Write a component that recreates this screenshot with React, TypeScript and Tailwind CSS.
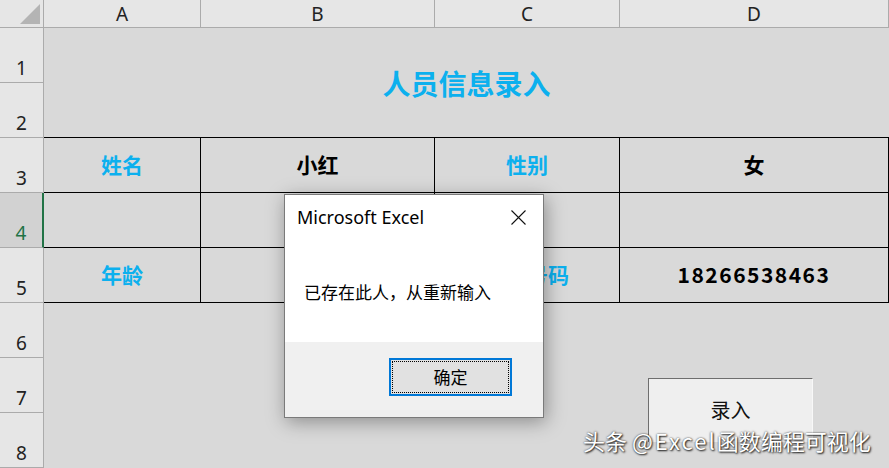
import React from "react";

const cjk = { fontFamily: '"Noto Sans CJK SC", "Noto Sans", sans-serif' };
const ui = { fontFamily: '"Noto Sans", "Noto Sans CJK SC", sans-serif' };

function RowHead({ n, active }: { n: number; active?: boolean }) {
  return (
    <div
      className={
        active
          ? "h-[55px] w-[44px] border-b border-[#ababab] border-r-2 border-r-[#217346] bg-[#d2d2d2] text-[#217346] flex items-end justify-center pb-[2px] text-[19px] leading-[24px]"
          : "h-[55px] w-[44px] border-b border-r border-[#ababab] bg-[#e6e6e6] text-[#222] flex items-end justify-center pb-[2px] text-[19px] leading-[24px]"
      }
      style={ui}
    >
      {n}
    </div>
  );
}

function Cell({
  w,
  children,
  blue,
}: {
  w: string;
  children?: React.ReactNode;
  blue?: boolean;
}) {
  return (
    <div
      className={`${w} h-full border-r border-black flex items-center justify-center font-bold text-[21px] ${
        blue ? "text-[#0cb0ee]" : "text-black"
      }`}
      style={cjk}
    >
      {children}
    </div>
  );
}

export default function App() {
  return (
    <div className="relative w-[889px] h-[468px] overflow-hidden bg-[#d9d9d9] flex flex-col">
      {/* column header */}
      <div
        className="flex h-[28px] bg-[#e6e6e6] border-b border-[#ababab] text-[19px] leading-[24px] text-[#222]"
        style={ui}
      >
        <div className="w-[44px] h-full border-r border-[#ababab] relative">
          <svg className="absolute left-0 top-0" width="44" height="27">
            <polygon points="40,4 40,24 20,24" fill="#b4b4b4" />
          </svg>
        </div>
        <div className="w-[157px] border-r border-[#ababab] flex items-center justify-center">A</div>
        <div className="w-[234px] border-r border-[#ababab] flex items-center justify-center">B</div>
        <div className="w-[185px] border-r border-[#ababab] flex items-center justify-center">C</div>
        <div className="w-[269px] border-r border-[#ababab] flex items-center justify-center">D</div>
      </div>

      <div className="flex flex-1">
        {/* row headers */}
        <div className="flex flex-col w-[44px]">
          {[1, 2, 3, 4, 5, 6, 7, 8].map((n) => (
            <RowHead key={n} n={n} active={n === 4} />
          ))}
        </div>

        {/* sheet */}
        <div className="flex flex-col flex-1">
          <div
            className="h-[109px] flex items-center justify-center font-bold text-[28px] text-[#0cb0ee]"
            style={cjk}
          >
            人员信息录入
          </div>
          <div className="border-t border-black flex flex-col">
            <div className="flex h-[55px] border-b border-black">
              <Cell w="w-[157px]" blue>姓名</Cell>
              <Cell w="w-[234px]">小红</Cell>
              <Cell w="w-[185px]" blue>性别</Cell>
              <Cell w="w-[269px]">女</Cell>
            </div>
            <div className="flex h-[55px] border-b border-black">
              <Cell w="w-[157px]" />
              <Cell w="w-[234px]" />
              <Cell w="w-[185px]" />
              <Cell w="w-[269px]" />
            </div>
            <div className="flex h-[55px] border-b border-black">
              <Cell w="w-[157px]" blue>年龄</Cell>
              <Cell w="w-[234px]" />
              <Cell w="w-[185px]" blue>电话号码</Cell>
              <Cell w="w-[269px]">
                <span className="tracking-[1.5px]">18266538463</span>
              </Cell>
            </div>
          </div>
          <div className="flex-1" />
        </div>
      </div>

      {/* Form button on sheet */}
      <div
        className="absolute left-[648px] top-[378px] w-[165px] h-[64px] bg-[#efefef] border-t border-l border-[#6e6e6e] border-r border-r-[#f8f8f8] flex items-start justify-center pt-[17px] text-[20px] leading-[28px] text-[#111]"
        style={cjk}
      >
        录入
      </div>

      {/* Message box */}
      <div className="absolute left-[284px] top-[194px] w-[260px] h-[224px] border border-[#7a7a7a] bg-white flex flex-col shadow-[2px_4px_18px_rgba(0,0,0,0.35)]">
        <div className="h-[147px] bg-white relative">
          <div
            className="absolute left-[12px] top-[8px] text-[18px] leading-[28px] text-black"
            style={ui}
          >
            Microsoft Excel
          </div>
          <svg className="absolute left-[226px] top-[15px]" width="15" height="15" viewBox="0 0 15 15">
            <path d="M0.5 0.5 L14.5 14.5 M14.5 0.5 L0.5 14.5" stroke="#111" strokeWidth="1.1" />
          </svg>
          <div
            className="absolute left-[19px] top-[84px] text-[17px] leading-[26px] text-black"
            style={cjk}
          >
            已存在此人，从重新输入
          </div>
        </div>
        <div className="flex-1 bg-[#f0f0f0] flex items-start pl-[104px] pt-[16px]">
          <div className="w-[123px] h-[38px] border-2 border-[#0078d7] bg-[#e1e1e1] p-[1px]">
            <div
              className="w-full h-full border border-dotted border-black flex items-center justify-center text-[17px] text-black"
              style={cjk}
            >
              确定
            </div>
          </div>
        </div>
      </div>

      {/* watermark */}
      <div
        className="absolute left-[583px] top-[425px] text-[22px] leading-[30px] text-white whitespace-nowrap [text-shadow:1px_1px_2px_rgba(0,0,0,0.85),0_0_2px_rgba(0,0,0,0.7)]"
        style={cjk}
      >
        头条 <span className="tracking-[2px]">@Excel</span>函数编程可视化
      </div>
    </div>
  );
}
